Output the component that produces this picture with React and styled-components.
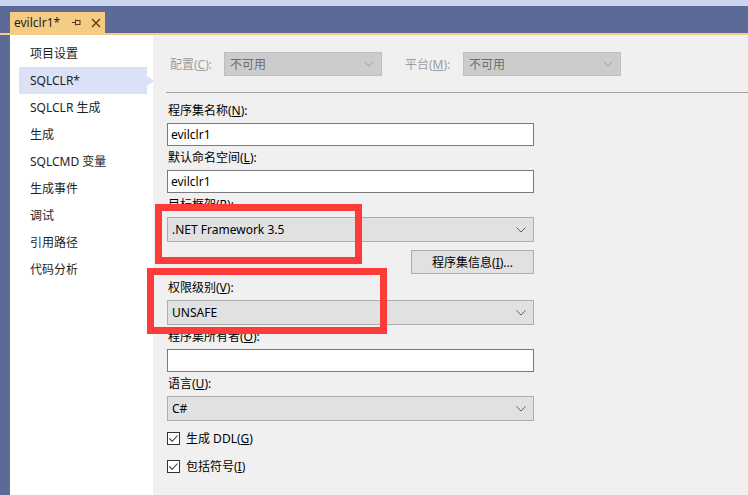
import React from "react";
import styled, { createGlobalStyle } from "styled-components";

const GlobalStyle = createGlobalStyle`
  html, body, #root { margin: 0; padding: 0; height: 100%; }
  body {
    font-family: "Noto Sans", "Noto Sans CJK SC", sans-serif;
    font-size: 12px;
    color: #1e1e1e;
  }
  * { box-sizing: border-box; }
`;

const Page = styled.div`
  position: relative;
  height: 100vh;
  display: flex;
  flex-direction: column;
  background: #5b6a96;
  overflow: hidden;
`;

const TopStrip = styled.div`
  height: 6px;
  background: #ccd5ef;
`;

const TabBar = styled.div`
  height: 27px;
  padding-left: 10px;
  display: flex;
  align-items: flex-end;
`;

const Tab = styled.div`
  width: 95px;
  height: 21px;
  background: #f5cc84;
  display: flex;
  align-items: center;
  padding-left: 4px;
  color: #1e1e1e;
`;

const TabTitle = styled.span`
  width: 58px;
  line-height: 16px;
`;

const TabIcon = styled.svg`
  display: block;
  margin-right: ${(p) => p.$gap || 0}px;
`;

const AccentLine = styled.div`
  height: 2px;
  background: #f5cc84;
`;

const Body = styled.div`
  flex: 1;
  display: flex;
  padding-left: 10px;
`;

const Sidebar = styled.div`
  width: 143px;
  background: #ffffff;
  padding-top: 5px;
`;

const NavItem = styled.div`
  position: relative;
  height: 27px;
  width: 128px;
  margin-left: 9px;
  padding-left: 11px;
  line-height: 27px;
  white-space: nowrap;
  background: ${(p) => (p.$active ? "#dbe1f6" : "transparent")};
  &::after {
    content: "";
    display: ${(p) => (p.$active ? "block" : "none")};
    position: absolute;
    right: -7px;
    top: 9px;
    border-left: 7px solid #dbe1f6;
    border-top: 5px solid transparent;
    border-bottom: 5px solid transparent;
  }
`;

const Content = styled.div`
  flex: 1;
  display: flex;
  flex-direction: column;
  align-items: flex-start;
  background: #f0f0f0;
  padding: 17px 0 0 14px;
`;

const TopRow = styled.div`
  display: flex;
  align-items: center;
  height: 24px;
`;

const TopLabel = styled.span`
  width: ${(p) => p.$width}px;
  margin-left: ${(p) => p.$offset || 0}px;
  padding-left: 3px;
  color: #9d9d9d;
`;

const SelectBox = styled.div`
  display: flex;
  align-items: center;
  justify-content: space-between;
  width: ${(p) => p.$width || 367}px;
  height: ${(p) => p.$height || 25}px;
  padding: 0 7px 0 ${(p) => (p.$disabled ? 5 : 4)}px;
  background: ${(p) => (p.$disabled ? "#cccccc" : "#e1e1e1")};
  border: 1px solid ${(p) => (p.$disabled ? "#bfbfbf" : "#adadad")};
  color: ${(p) => (p.$disabled ? "#6d6d6d" : "#000")};
`;

const Chevron = styled.svg`
  display: block;
  flex: none;
`;

const Separator = styled.div`
  align-self: stretch;
  height: 1px;
  background: #a0a0a0;
  margin: 16px 0 6px -1px;
`;

const FieldLabel = styled.div`
  height: 16px;
  line-height: 16px;
  margin: 4px 0 4px 1px;
  color: #000;
`;

const TextInput = styled.div`
  width: 367px;
  height: 23px;
  padding-left: 3px;
  line-height: 21px;
  background: #ffffff;
  border: 1px solid #7a7a7a;
  color: #000;
`;

const ButtonRow = styled.div`
  display: flex;
  width: 367px;
  justify-content: flex-end;
  margin: 8px 0 2px;
`;

const PushButton = styled.div`
  width: 123px;
  height: 24px;
  display: flex;
  align-items: center;
  justify-content: center;
  background: #e1e1e1;
  border: 1px solid #adadad;
  color: #000;
`;

const CheckRow = styled.div`
  display: flex;
  align-items: center;
  height: 16px;
  margin-top: ${(p) => p.$top}px;
  color: #000;
`;

const CheckBox = styled.div`
  width: 13px;
  height: 13px;
  border: 1px solid #333333;
  background: #ffffff;
  margin-right: 6px;
  display: flex;
  align-items: center;
  justify-content: center;
`;

const Highlight = styled.div`
  position: absolute;
  left: ${(p) => p.$x}px;
  top: ${(p) => p.$y}px;
  width: ${(p) => p.$w}px;
  height: ${(p) => p.$h}px;
  border: 7px solid #fe3b3b;
  pointer-events: none;
`;

const Arrow = ({ disabled }) => (
  <Chevron width="10" height="6" viewBox="0 0 10 6">
    <path
      d="M0.5 0.5 L5 5 L9.5 0.5"
      fill="none"
      stroke={disabled ? "#a0a0a0" : "#606060"}
      strokeWidth="1"
    />
  </Chevron>
);

const Select = ({ children, disabled, width }) => (
  <SelectBox $disabled={disabled} $width={width} $height={disabled ? 24 : 25}>
    <span>{children}</span>
    <Arrow disabled={disabled} />
  </SelectBox>
);

const Check = ({ top, children }) => (
  <CheckRow $top={top}>
    <CheckBox>
      <svg width="11" height="11" viewBox="0 0 11 11">
        <path d="M1.5 5.5 L4.2 8.3 L9.5 2.5" fill="none" stroke="#333" strokeWidth="1.1" />
      </svg>
    </CheckBox>
    <span>{children}</span>
  </CheckRow>
);

const navItems = [
  "项目设置",
  "SQLCLR*",
  "SQLCLR 生成",
  "生成",
  "SQLCMD 变量",
  "生成事件",
  "调试",
  "引用路径",
  "代码分析",
];

export default function App() {
  return (
    <>
      <GlobalStyle />
      <Page>
        <TopStrip />
        <TabBar>
          <Tab>
            <TabTitle>evilclr1*</TabTitle>
            <TabIcon width="9" height="9" viewBox="0 0 9 9" $gap={10}>
              <path d="M0 4.5 H3 M3.5 1.5 V7.5" stroke="#5a3a10" strokeWidth="1" fill="none" />
              <rect x="3.5" y="2.5" width="4.5" height="4" stroke="#5a3a10" strokeWidth="1" fill="none" />
            </TabIcon>
            <TabIcon width="10" height="10" viewBox="0 0 10 10">
              <path d="M1 1 L9 9 M9 1 L1 9" stroke="#5a3a10" strokeWidth="1.4" fill="none" />
            </TabIcon>
          </Tab>
        </TabBar>
        <AccentLine />
        <Body>
          <Sidebar>
            {navItems.map((item) => (
              <NavItem key={item} $active={item === "SQLCLR*"}>
                {item}
              </NavItem>
            ))}
          </Sidebar>
          <Content>
            <TopRow>
              <TopLabel $width={57}>
                配置(<u>C</u>):
              </TopLabel>
              <Select disabled width={158}>不可用</Select>
              <TopLabel $width={61} $offset={20}>
                平台(<u>M</u>):
              </TopLabel>
              <Select disabled width={158}>不可用</Select>
            </TopRow>
            <Separator />
            <FieldLabel>
              程序集名称(<u>N</u>):
            </FieldLabel>
            <TextInput>evilclr1</TextInput>
            <FieldLabel>
              默认命名空间(<u>L</u>):
            </FieldLabel>
            <TextInput>evilclr1</TextInput>
            <FieldLabel>
              目标框架(<u>R</u>):
            </FieldLabel>
            <Select>.NET Framework 3.5</Select>
            <ButtonRow>
              <PushButton>
                程序集信息(<u>I</u>)...
              </PushButton>
            </ButtonRow>
            <FieldLabel>
              权限级别(<u>V</u>):
            </FieldLabel>
            <Select>UNSAFE</Select>
            <FieldLabel>
              程序集所有者(<u>O</u>):
            </FieldLabel>
            <TextInput />
            <FieldLabel>
              语言(<u>U</u>):
            </FieldLabel>
            <Select>C#</Select>
            <Check top={9}>
              生成 DDL(<u>G</u>)
            </Check>
            <Check top={12}>
              包括符号(<u>I</u>)
            </Check>
          </Content>
        </Body>
        <Highlight $x={155} $y={204} $w={207} $h={60} />
        <Highlight $x={147} $y={268} $w={240} $h={66} />
      </Page>
    </>
  );
}
